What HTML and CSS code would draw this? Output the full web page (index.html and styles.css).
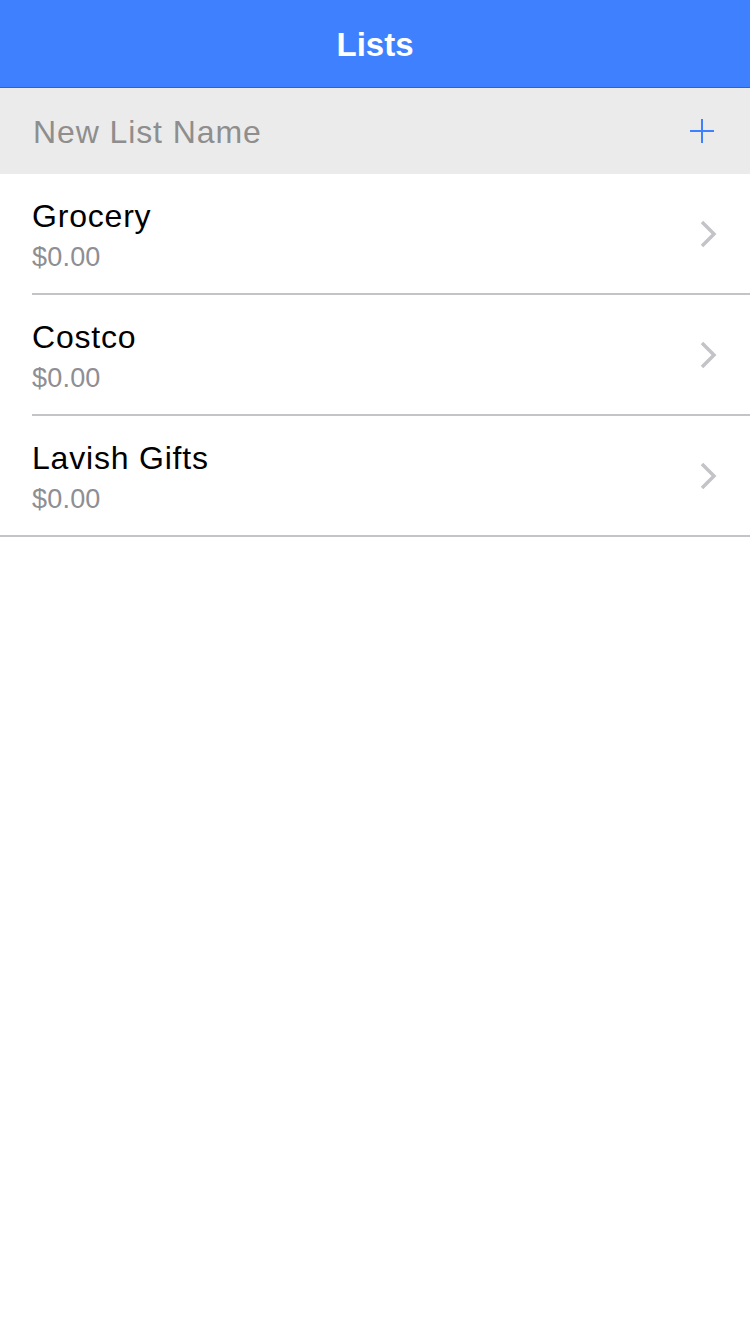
FILE: index.html
```html
<!DOCTYPE html>
<html>
<head>
<meta charset="utf-8">
<link rel="stylesheet" href="styles.css">
</head>
<body>
<div class="app">
  <header class="navbar"><h1 class="title">Lists</h1></header>
  <div class="new-row">
    <span class="placeholder">New List Name</span>
    <svg class="plus" width="24" height="24" viewBox="0 0 24 24"><path d="M12 0V24M0 12H24" stroke="#3f80ff" stroke-width="2" fill="none"/></svg>
  </div>
  <ul class="list">
    <li class="row">
      <div class="text"><div class="name">Grocery</div><div class="price">$0.00</div></div>
      <svg class="chev" width="18" height="30" viewBox="0 0 18 30"><path d="M3 3L15 15L3 27" stroke="#c3c3c8" stroke-width="3.5" fill="none"/></svg>
    </li>
    <li class="row">
      <div class="text"><div class="name">Costco</div><div class="price">$0.00</div></div>
      <svg class="chev" width="18" height="30" viewBox="0 0 18 30"><path d="M3 3L15 15L3 27" stroke="#c3c3c8" stroke-width="3.5" fill="none"/></svg>
    </li>
    <li class="row last">
      <div class="text"><div class="name">Lavish Gifts</div><div class="price">$0.00</div></div>
      <svg class="chev" width="18" height="30" viewBox="0 0 18 30"><path d="M3 3L15 15L3 27" stroke="#c3c3c8" stroke-width="3.5" fill="none"/></svg>
    </li>
  </ul>
</div>
</body>
</html>
```
FILE: styles.css
```css
html, body {
  margin: 0;
  padding: 0;
  background: #ffffff;
  font-family: "Liberation Sans", Arial, sans-serif;
}
.app {
  width: 750px;
  min-height: 1334px;
  background: #ffffff;
}
.navbar {
  height: 88px;
  box-sizing: border-box;
  background: #3f80ff;
  border-bottom: 1px solid #2e63c9;
  padding-top: 25px;
}
.title {
  margin: 0;
  text-align: center;
  color: #ffffff;
  font-size: 33px;
  font-weight: bold;
  line-height: 40px;
}
.new-row {
  height: 86px;
  background: #ebebeb;
  display: flex;
  align-items: center;
  justify-content: space-between;
  padding: 0 36px 0 33px;
}
.placeholder {
  font-size: 32px;
  line-height: 36px;
  color: #8e8e8e;
  letter-spacing: 0.9px;
  margin-top: 1px;
}
.plus {
  display: block;
}
.list {
  list-style: none;
  margin: 0;
  padding: 0;
}
.row {
  display: flex;
  align-items: center;
  justify-content: space-between;
  margin-left: 32px;
  padding-right: 33px;
  height: 119px;
  border-bottom: 2px solid #c4c3c8;
}
.row.last {
  margin-left: 0;
  padding-left: 32px;
}
.text {
  display: flex;
  flex-direction: column;
  padding-top: 2px;
}
.name {
  font-size: 32px;
  line-height: 36px;
  color: #000000;
  letter-spacing: 0.8px;
}
.price {
  font-size: 27px;
  line-height: 30px;
  color: #8e8e93;
  letter-spacing: 0.2px;
  margin-top: 8px;
}
.chev {
  display: block;
}
```
